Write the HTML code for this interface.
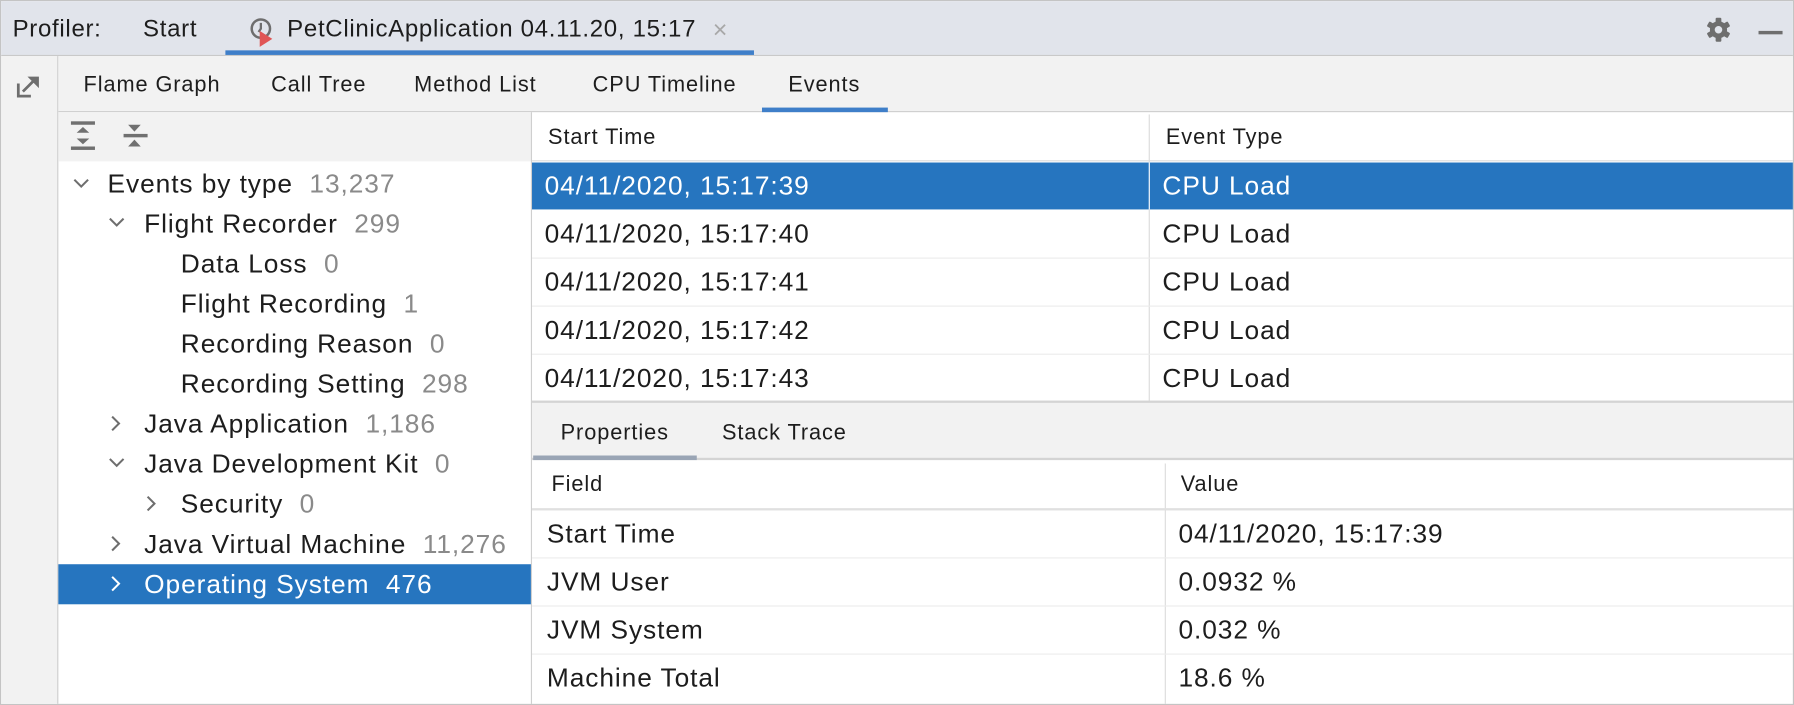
<!DOCTYPE html>
<html><head><style>
html,body{margin:0;padding:0;background:#fff;overflow:hidden}
#w{width:1568px;height:616px;transform:scale(1.14413,1.14448);transform-origin:0 0;position:relative;font-family:"Liberation Sans",sans-serif;color:#1d1d1d;background:#fff;border:1px solid #c4c4c4;box-sizing:border-box;overflow:hidden}
.a{position:absolute;white-space:nowrap}
.t{font-size:19px;letter-spacing:0.8px}
.h{font-size:21px;letter-spacing:0.6px}
.r{font-size:23px;letter-spacing:0.8px}
.g{color:#8a8a8a}
</style></head><body><div id="w">
<!-- top bar -->
<div class="a" style="left:0;top:0;width:1568px;height:47px;background:#e1e4eb;border-bottom:1px solid #c9c9c9"></div>
<div class="a h" style="left:10px;top:13px">Profiler:</div>
<div class="a h" style="left:124px;top:13px">Start</div>
<svg class="a" style="left:215px;top:12px" width="30" height="30" viewBox="0 0 30 30"><circle cx="12" cy="12" r="8" fill="none" stroke="#6e6e6e" stroke-width="2.2"/><path d="M12 7v5l-2 3" fill="none" stroke="#6e6e6e" stroke-width="2"/><path d="M11 14l11 7-11 7z" fill="#e05555"/></svg>
<div class="a h" style="left:250px;top:13px">PetClinicApplication 04.11.20, 15:17</div>
<div class="a" style="left:622px;top:12px;font-size:22px;color:#a8a8a8">×</div>
<div class="a" style="left:196px;top:43px;width:462px;height:4px;background:#3f7fc9"></div>
<svg class="a" style="left:1489px;top:13px" width="24" height="24" viewBox="0 0 24 24"><g fill="#6e6e6e"><circle cx="12" cy="12" r="7.5"/><rect x="9.5" y="1.5" width="5" height="21" rx="1"/><rect x="9.5" y="1.5" width="5" height="21" rx="1" transform="rotate(60 12 12)"/><rect x="9.5" y="1.5" width="5" height="21" rx="1" transform="rotate(120 12 12)"/></g><circle cx="12" cy="12" r="3.3" fill="#e1e4eb"/></svg>
<div class="a" style="left:1536px;top:26px;width:21px;height:3px;background:#6e6e6e"></div>
<!-- left strip -->
<div class="a" style="left:0;top:48px;width:49px;height:568px;background:#f2f2f2;border-right:1px solid #cfcfcf"></div>
<svg class="a" style="left:12px;top:63px" width="24" height="24" viewBox="0 0 24 24"><path d="M3 9v11h11" fill="none" stroke="#6e6e6e" stroke-width="2.4"/><path d="M7 16L18 5" stroke="#6e6e6e" stroke-width="2.4"/><path d="M11 3h10v10z" fill="#6e6e6e"/></svg>
<!-- tabs row -->
<div class="a" style="left:50px;top:48px;width:1518px;height:48px;background:#f2f2f2;border-bottom:1px solid #cfcfcf"></div>
<div class="a t" style="left:72px;top:63px">Flame Graph</div>
<div class="a t" style="left:236px;top:63px">Call Tree</div>
<div class="a t" style="left:361px;top:63px">Method List</div>
<div class="a t" style="left:517px;top:63px">CPU Timeline</div>
<div class="a t" style="left:688px;top:63px">Events</div>
<div class="a" style="left:665px;top:93px;width:110px;height:4px;background:#3f7fc9"></div>
<!-- left panel -->
<div class="a" style="left:50px;top:97px;width:413px;height:43px;background:#f2f2f2"></div>
<svg class="a" style="left:60px;top:104px" width="70" height="30" viewBox="0 0 70 30"><g fill="#707070"><rect x="1" y="1" width="21" height="3"/><rect x="1" y="23" width="21" height="3"/><path d="M6 11l5.5-5 5.5 5z"/><path d="M6 16l5.5 5 5.5-5z"/><rect x="47" y="12" width="21" height="3"/><path d="M51 4h11l-5.5 6z"/><path d="M51 23h11l-5.5-6z"/></g></svg>
<div class="a" style="left:463px;top:97px;width:1px;height:519px;background:#cfcfcf"></div>
<div class="a" style="left:50px;top:492px;width:413px;height:35px;background:#2675bf"></div>
<svg class="a" style="left:0;top:0" width="463" height="616"><g fill="none" stroke="#6e6e6e" stroke-width="1.8"><path d="M64 156l6 6 6-6"/><path d="M95 190l6 6 6-6"/><path d="M97 363l6 6-6 6"/><path d="M95 400l6 6 6-6"/><path d="M128 433l6 6-6 6"/><path d="M97 468l6 6-6 6"/><path d="M97 503l6 6-6 6" stroke="#fff"/></g></svg>
<div class="a r" style="left:93px;top:146px">Events by type&nbsp;&nbsp;<span class="g">13,237</span></div>
<div class="a r" style="left:125px;top:181px">Flight Recorder&nbsp;&nbsp;<span class="g">299</span></div>
<div class="a r" style="left:157px;top:216px">Data Loss&nbsp;&nbsp;<span class="g">0</span></div>
<div class="a r" style="left:157px;top:251px">Flight Recording&nbsp;&nbsp;<span class="g">1</span></div>
<div class="a r" style="left:157px;top:286px">Recording Reason&nbsp;&nbsp;<span class="g">0</span></div>
<div class="a r" style="left:157px;top:321px">Recording Setting&nbsp;&nbsp;<span class="g">298</span></div>
<div class="a r" style="left:125px;top:356px">Java Application&nbsp;&nbsp;<span class="g">1,186</span></div>
<div class="a r" style="left:125px;top:391px">Java Development Kit&nbsp;&nbsp;<span class="g">0</span></div>
<div class="a r" style="left:157px;top:426px">Security&nbsp;&nbsp;<span class="g">0</span></div>
<div class="a r" style="left:125px;top:461px">Java Virtual Machine&nbsp;&nbsp;<span class="g">11,276</span></div>
<div class="a r" style="left:125px;top:496px;color:#fff">Operating System&nbsp;&nbsp;476</div>
<!-- events table -->
<div class="a" style="left:464px;top:139px;width:1104px;height:1px;background:#dcdcdc"></div>
<div class="a" style="left:1003px;top:99px;width:1px;height:250px;background:#dcdcdc"></div>
<div class="a t" style="left:478px;top:109px">Start Time</div>
<div class="a t" style="left:1018px;top:109px">Event Type</div>
<div class="a" style="left:464px;top:141px;width:1104px;height:41px;background:#2675bf"></div>
<div class="a" style="left:1003px;top:141px;width:1px;height:41px;background:#fff"></div>
<div class="a" style="left:464px;top:224px;width:1104px;height:1px;background:#ececec"></div>
<div class="a" style="left:464px;top:266px;width:1104px;height:1px;background:#ececec"></div>
<div class="a" style="left:464px;top:308px;width:1104px;height:1px;background:#ececec"></div>
<div class="a r" style="left:475px;top:148px;color:#fff">04/11/2020, 15:17:39</div><div class="a r" style="left:1015px;top:148px;color:#fff">CPU Load</div>
<div class="a r" style="left:475px;top:190px">04/11/2020, 15:17:40</div><div class="a r" style="left:1015px;top:190px">CPU Load</div>
<div class="a r" style="left:475px;top:232px">04/11/2020, 15:17:41</div><div class="a r" style="left:1015px;top:232px">CPU Load</div>
<div class="a r" style="left:475px;top:274px">04/11/2020, 15:17:42</div><div class="a r" style="left:1015px;top:274px">CPU Load</div>
<div class="a r" style="left:475px;top:316px">04/11/2020, 15:17:43</div><div class="a r" style="left:1015px;top:316px">CPU Load</div>
<!-- bottom panel -->
<div class="a" style="left:464px;top:349px;width:1104px;height:52px;background:#f2f2f2;border-top:2px solid #d4d4d4;border-bottom:2px solid #d4d4d4;box-sizing:border-box"></div>
<div class="a t" style="left:489px;top:367px">Properties</div>
<div class="a t" style="left:630px;top:367px">Stack Trace</div>
<div class="a" style="left:465px;top:397px;width:143px;height:4px;background:#9aa5b5"></div>
<div class="a" style="left:1017px;top:404px;width:1px;height:212px;background:#dcdcdc"></div>
<div class="a" style="left:464px;top:443px;width:1104px;height:2px;background:#e0e0e0"></div>
<div class="a t" style="left:481px;top:412px">Field</div>
<div class="a t" style="left:1031px;top:412px">Value</div>
<div class="a" style="left:464px;top:486px;width:1104px;height:1px;background:#ececec"></div>
<div class="a" style="left:464px;top:528px;width:1104px;height:1px;background:#ececec"></div>
<div class="a" style="left:464px;top:570px;width:1104px;height:1px;background:#ececec"></div>
<div class="a r" style="left:477px;top:452px">Start Time</div><div class="a r" style="left:1029px;top:452px">04/11/2020, 15:17:39</div>
<div class="a r" style="left:477px;top:494px">JVM User</div><div class="a r" style="left:1029px;top:494px">0.0932 %</div>
<div class="a r" style="left:477px;top:536px">JVM System</div><div class="a r" style="left:1029px;top:536px">0.032 %</div>
<div class="a r" style="left:477px;top:578px">Machine Total</div><div class="a r" style="left:1029px;top:578px">18.6 %</div>
</div></body></html>
